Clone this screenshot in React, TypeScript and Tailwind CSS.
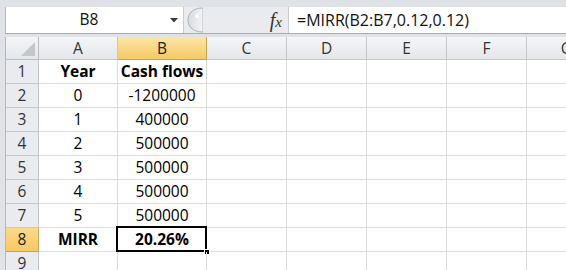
import React from "react"

const cols = ["A", "B", "C", "D", "E", "F", "G"]

const rows: { a: string; b: string; bold?: boolean }[] = [
  { a: "Year", b: "Cash flows", bold: true },
  { a: "0", b: "-1200000" },
  { a: "1", b: "400000" },
  { a: "2", b: "500000" },
  { a: "3", b: "500000" },
  { a: "4", b: "500000" },
  { a: "5", b: "500000" },
  { a: "MIRR", b: "20.26%", bold: true },
  { a: "", b: "" },
]

const colWidths = ["w-[79px]", "w-[89px]", "w-[80px]", "w-[80px]", "w-[80px]", "w-[80px]", "w-[80px]"]

export default function App() {
  return (
    <div
      className="w-[566px] h-[270px] overflow-hidden bg-[#dfe2e6] pt-[7px] pl-[5px] flex flex-col"
      style={{ fontFamily: '"Open Sans", "Liberation Sans", sans-serif' }}
    >
      {/* Formula bar */}
      <div className="h-[27px] flex border-b border-[#a7abb0] border-l border-l-[#b4b9bf] shrink-0">
        <div className="w-[178px] bg-white flex items-center border-r border-[#c9ccd0]">
          <span className="flex-1 text-center text-[15.5px] text-[#111] pl-[2px]">B8</span>
          <svg width="8" height="5" viewBox="0 0 8 5" className="mr-[5px]">
            <path d="M0 0 L8 0 L4 4.5 Z" fill="#3a3a3a" />
          </svg>
        </div>
        <div className="w-[104px] bg-[#e9ebee] flex items-center">
          <svg width="16" height="26" viewBox="0 0 16 26" className="ml-[3px]">
            <defs>
              <linearGradient id="sp" x1="0" y1="0" x2="1" y2="0">
                <stop offset="0" stopColor="#d8dbdf" />
                <stop offset="1" stopColor="#f3f4f6" />
              </linearGradient>
            </defs>
            <path d="M16 1 C4 1 1 8 1 13 C1 18 4 25 16 25 Z" fill="url(#sp)" stroke="#b0b4ba" strokeWidth="1" />
            <circle cx="10" cy="9" r="2" fill="#ffffff" />
          </svg>
          <span
            className="ml-auto mr-[6px] text-[20px] italic text-[#333] leading-none"
            style={{ fontFamily: '"Liberation Serif", serif' }}
          >
            f<span className="text-[15px]">x</span>
          </span>
        </div>
        <div className="flex-1 bg-white flex items-center pl-[8px] border-l border-[#c9ccd0]">
          <span className="text-[16px] text-[#111] whitespace-nowrap">=MIRR(B2:B7,0.12,0.12)</span>
        </div>
      </div>

      <div className="h-[3px] shrink-0" />

      {/* Sheet */}
      <div className="flex flex-col bg-white border-l border-[#b4b9bf]">
        {/* Column headers */}
        <div className="flex h-[23px]">
          <div className="w-[33px] shrink-0 bg-gradient-to-b from-[#f4f5f7] to-[#e4e7eb] border-r border-b border-[#b9bdc3] flex items-end justify-end p-[3px]">
            <svg width="14" height="14" viewBox="0 0 14 14">
              <path d="M14 0 L14 14 L0 14 Z" fill="#c3c7cc" />
            </svg>
          </div>
          {cols.map((c, i) => (
            <div
              key={c}
              className={`${colWidths[i]} shrink-0 flex items-center justify-center pt-[2px] text-[15.5px] border-r border-b ${
                c === "B"
                  ? "bg-gradient-to-b from-[#fbe6a8] to-[#f6c962] border-[#c9a54a] text-[#222]"
                  : "bg-gradient-to-b from-[#f4f5f7] to-[#e4e7eb] border-[#c4c8cd] text-[#333]"
              }`}
            >
              {c}
            </div>
          ))}
        </div>

        {rows.map((r, i) => {
          const n = i + 1
          const sel = n === 8
          return (
            <div key={n} className="flex h-[24px]">
              <div
                className={`w-[33px] shrink-0 flex items-center justify-center text-[15.5px] border-r border-b ${
                  sel
                    ? "bg-gradient-to-b from-[#fad98a] to-[#f6c962] border-[#c9a54a] text-[#222]"
                    : "bg-[#e9ebee] border-[#c4c8cd] text-[#333]"
                }`}
              >
                {n}
              </div>
              <div
                className={`w-[79px] shrink-0 flex items-center justify-center text-[15.5px] text-black border-r border-b border-[#dadcdd] ${
                  r.bold ? "font-bold" : ""
                }`}
              >
                {r.a}
              </div>
              <div
                className={`w-[89px] shrink-0 relative flex items-center justify-center text-[15.5px] text-black border-r border-b border-[#dadcdd] ${
                  r.bold ? "font-bold" : ""
                }`}
              >
                {r.b}
                {sel && (
                  <>
                    <div className="absolute -left-[2px] -top-[2px] -right-[1px] -bottom-[1px] border-2 border-black" />
                    <div className="absolute -right-[4px] -bottom-[4px] w-[6px] h-[6px] bg-black border border-white" />
                  </>
                )}
              </div>
              {colWidths.slice(2).map((w, j) => (
                <div key={j} className={`${w} shrink-0 border-r border-b border-[#dadcdd]`} />
              ))}
            </div>
          )
        })}
      </div>
    </div>
  )
}
